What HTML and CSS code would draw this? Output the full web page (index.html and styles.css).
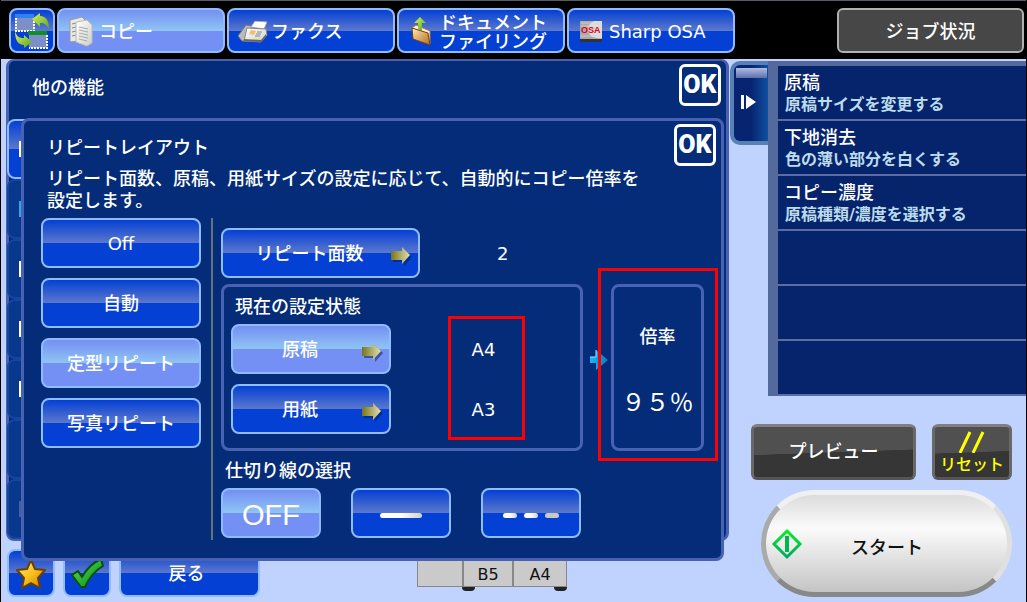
FILE: index.html
```html
<!DOCTYPE html>
<html lang="ja">
  <head>
    <meta charset="utf-8">
    <title>リピートレイアウト</title>
    <link rel="stylesheet" href="styles.css">
  </head>
  <body>
    <svg class="defs" aria-hidden="true">
      <defs>
        <linearGradient id="leaf" x1="0" y1="0" x2="1" y2="1">
          <stop offset="0" stop-color="#d8f060" />
          <stop offset="1" stop-color="#58a818" />
        </linearGradient>
        <linearGradient id="paper" x1="0" y1="0" x2="1" y2="1">
          <stop offset="0" stop-color="#ffffff" />
          <stop offset="1" stop-color="#cfcfc8" />
        </linearGradient>
        <linearGradient id="folder" x1="0" y1="0" x2="1" y2="1">
          <stop offset="0" stop-color="#ffe8c0" />
          <stop offset="1" stop-color="#b86a18" />
        </linearGradient>
        <linearGradient id="olive" x1="0" y1="0" x2="1" y2="0">
          <stop offset="0" stop-color="#77751a" />
          <stop offset="1" stop-color="#e4e2b4" />
        </linearGradient>
        <linearGradient id="gold" x1="0" y1="0" x2="1" y2="1">
          <stop offset="0" stop-color="#fff080" />
          <stop offset="0.5" stop-color="#f8c020" />
          <stop offset="1" stop-color="#d07800" />
        </linearGradient>
        <linearGradient id="tick" x1="0" y1="0" x2="1" y2="1">
          <stop offset="0" stop-color="#60e050" />
          <stop offset="1" stop-color="#008818" />
        </linearGradient>
        <linearGradient id="sky" x1="0" y1="0" x2="1" y2="0">
          <stop offset="0" stop-color="#10b8ff" />
          <stop offset="1" stop-color="#1078c0" />
        </linearGradient>
        <linearGradient id="start" x1="0" y1="0" x2="0" y2="1">
          <stop offset="0" stop-color="#00f020" />
          <stop offset="1" stop-color="#00a868" />
        </linearGradient>
        <symbol id="next" viewBox="0 0 22 20">
          <path d="M3 7h11V3l8 8-8 9v-4H3z" fill="#001a50" opacity="0.5" />
          <path d="M1 5h11V1l8 8-8 9v-4H1z" fill="url(#olive)" />
        </symbol>
      </defs>
    </svg>

    <header class="modes">
      <button class="btn swap" aria-label="画面切替">
        <svg width="36" height="38" viewBox="0 0 36 38">
          <path d="M1 1h19v17H1z" fill="#7c8fc8" />
          <path d="M1 1h19v4H1z" fill="#3080f0" />
          <path d="M2 5v13h18V6" fill="none" stroke="#fff" stroke-width="2" stroke-dasharray="2 1" />
          <path d="M15 19h18v16H15z" fill="#7c8fc8" />
          <path d="M14 18h19v4H14z" fill="#109020" />
          <path d="M33 22v13H15" fill="none" stroke="#fff" stroke-width="2" stroke-dasharray="2 1" />
          <path d="M18 6l8-6v3c6 0 9 5 9 13-3-5-5-6-9-6v4z" fill="url(#leaf)" />
          <path d="M1 18c2 6 4 7 9 7v-3l8 7-8 6v-3c-6 0-9-5-9-14z" fill="url(#leaf)" />
        </svg>
      </button>
      <button class="btn mode active">
        <svg width="24" height="30" viewBox="1 0 24 30">
          <path d="M2 3l12-3 3 3v20L2 25z" fill="#e8e8e4" stroke="#999" />
          <path d="M4 7l4-1M4 11l4-1M4 15l4-1M4 19l4-1" stroke="#888" />
          <path d="M8 5l11-2 5 5v18l-5 3L8 25z" fill="url(#paper)" stroke="#bbb" />
          <path d="M11 10l9 2M11 13l9 2M11 16l9 2M11 19l9 2M11 22l8 2" stroke="#aaa" />
        </svg>
        <span>コピー</span>
      </button>
      <button class="btn mode fax">
        <svg width="32" height="22" viewBox="0 0 32 22">
          <path d="M1 15L9 4l6 1-6 15H5z" fill="#bbb" stroke="#777" />
          <path d="M14 6l4-6 12 1-3 7z" fill="#fff" stroke="#aaa" />
          <path d="M10 7l19 1 1 6-6 7-17-1z" fill="url(#paper)" stroke="#888" />
          <path d="M14 9l5 1-2 4-5-1z" fill="#f0c070" />
          <path d="M20 11h5M19 13h5M18 15h5" stroke="#888" />
          <path d="M7 18l17 1 5-6v3l-5 5-17-1z" fill="#666" />
        </svg>
        <span>ファクス</span>
      </button>
      <button class="btn mode">
        <svg width="24" height="30" viewBox="0 0 24 30">
          <path d="M3 11l4-3 14 6v13L5 22z" fill="#fff3dc" stroke="#a87838" />
          <path d="M9 12V6H5l6-6 6 6h-4v8z" fill="url(#leaf)" />
          <path d="M3 11l16 5 2 12-17-6z" fill="url(#folder)" stroke="#704010" />
        </svg>
        <span>ドキュメント<br>ファイリング</span>
      </button>
      <button class="btn mode">
        <svg width="24" height="24" viewBox="0 0 24 24">
          <path d="M1 1h22v21H1z" fill="#aaa" />
          <path d="M2 3h20M2 6h20M2 16h20" stroke="#ccc" />
          <path d="M23 1v17c-8 1-14-2-14-9 0-4 3-7 7-8z" fill="#dcdcdc" />
          <path d="M1 19h22v3H1z" fill="#333" />
          <text x="2" y="13" class="osa">OSA</text>
        </svg>
        <span>Sharp OSA</span>
      </button>
      <button class="dark jobs">ジョブ状況</button>
    </header>

    <main>
      <section class="workspace">
        <div class="panel back-panel">
          <div class="panel-head">
            <h2>他の機能</h2>
            <button class="ok">OK</button>
          </div>
          <div class="tabs">
            <button class="tab current" aria-label="1"><i class="chip"></i></button>
            <button class="tab" aria-label="2"><i class="chip cyan"></i></button>
            <button class="tab" aria-label="3"><i class="chip"></i></button>
            <button class="tab" aria-label="4"><i class="chip"></i></button>
            <button class="tab" aria-label="5"><i class="chip"></i></button>
            <button class="tab" aria-label="6"></button>
            <button class="tab" aria-label="7"><i class="chip dim"></i></button>
          </div>
        </div>

        <div class="panel dialog" role="dialog" aria-labelledby="dialog-title">
          <div class="panel-head">
            <h1 id="dialog-title">リピートレイアウト</h1>
            <button class="ok">OK</button>
          </div>
          <p class="note">リピート面数、原稿、用紙サイズの設定に応じて、自動的にコピー倍率を<br>設定します。</p>

          <div class="settings">
            <div class="kinds">
              <button class="btn">Off</button>
              <button class="btn">自動</button>
              <button class="btn active">定型リピート</button>
              <button class="btn">写真リピート</button>
            </div>

            <div class="details">
              <div class="count">
                <button class="btn linked">リピート面数<svg width="22" height="20"><use href="#next" /></svg></button>
                <span>2</span>
              </div>

              <div class="state">
                <div class="frame current-state">
                  <h3>現在の設定状態</h3>
                  <div class="sizes">
                    <div class="size-buttons">
                      <button class="btn linked active">原稿<svg width="22" height="20"><use href="#next" /></svg></button>
                      <button class="btn linked">用紙<svg width="22" height="20"><use href="#next" /></svg></button>
                    </div>
                    <div class="size-values">
                      <span>A4</span>
                      <span>A3</span>
                    </div>
                  </div>
                </div>
                <svg class="to-rate" width="18" height="20" viewBox="0 0 18 20">
                  <path d="M0 7h6V0l12 10L6 20v-7H0z" fill="url(#sky)" />
                  <path d="M0 7h6V0" fill="none" stroke="#a8e0ff" />
                </svg>
                <div class="frame rate">
                  <span>倍率</span>
                  <strong>９５％</strong>
                </div>
              </div>

              <h3 class="line-title">仕切り線の選択</h3>
              <div class="lines">
                <button class="btn active off">OFF</button>
                <button class="btn" aria-label="実線"><i class="dash long"></i></button>
                <button class="btn" aria-label="破線"><i class="dash"></i><i class="dash"></i><i class="dash grey"></i></button>
              </div>
            </div>
          </div>
        </div>

        <footer class="bottom-bar">
          <button class="btn square" aria-label="お気に入り">
            <svg width="32" height="32" viewBox="0 0 32 32">
              <path d="M16 2l4 9 10 1-7 8 2 10-9-5-9 5 2-10-7-8 10-1z" fill="url(#gold)" stroke="#6a4000" stroke-width="2" stroke-linejoin="round" />
            </svg>
          </button>
          <button class="btn square" aria-label="確認">
            <svg width="34" height="32" viewBox="0 0 34 32">
              <path d="M2 17l6-4 4 6C17 10 22 5 31 1l2 7C24 13 19 20 15 29h-4z" fill="url(#tick)" stroke="#045010" stroke-width="2" stroke-linejoin="round" />
            </svg>
          </button>
          <button class="btn return">戻る</button>
          <div class="trays">
            <span></span>
            <span>B5</span>
            <span>A4</span>
          </div>
        </footer>
      </section>

      <aside class="side">
        <div class="menu">
          <button class="fold" aria-label="閉じる">
            <svg width="16" height="14" viewBox="0 0 16 14">
              <path d="M0 0h3v14H0zM5 0l10 7-10 7z" fill="#fff" />
            </svg>
          </button>
          <ul>
            <li><b>原稿</b><small>原稿サイズを変更する</small></li>
            <li><b>下地消去</b><small>色の薄い部分を白くする</small></li>
            <li><b>コピー濃度</b><small>原稿種類/濃度を選択する</small></li>
            <li></li>
            <li></li>
            <li></li>
          </ul>
        </div>
        <div class="actions">
          <button class="dark preview">プレビュー</button>
          <button class="dark reset">
            <svg width="28" height="22" viewBox="0 0 28 22">
              <path d="M2 22L12 1M15 22L25 1" stroke="#ffff00" stroke-width="3" />
            </svg>
            <span>リセット</span>
          </button>
          <button class="start">
            <svg width="32" height="32" viewBox="0 0 32 32">
              <path d="M16 3l13 13-13 13L3 16z" fill="none" stroke="url(#start)" stroke-width="3" />
              <path d="M14 8h4v16h-4z" fill="#00b848" />
            </svg>
            <span>スタート</span>
          </button>
        </div>
      </aside>
    </main>
  </body>
</html>
```
FILE: styles.css
```css
* {
  box-sizing: border-box;
}

body {
  margin: 0;
  min-height: 100vh;
  display: flex;
  flex-direction: column;
  border: 1px solid #000;
  border-width: 0 1px;
  background: #c0d3ff;
  color: #fff;
  font-family: "DejaVu Sans", "Noto Sans CJK JP", sans-serif;
  font-size: 18px;
  font-weight: 500;
  line-height: 22px;
}

button {
  margin: 0;
  padding: 0;
  color: inherit;
  font: inherit;
  cursor: pointer;
}

h1,
h2,
h3,
p,
ul {
  margin: 0;
  padding: 0;
  font-size: 18px;
  font-weight: 500;
}

.defs {
  position: absolute;
  width: 0;
  height: 0;
}

/* glossy blue buttons */
.btn {
  display: flex;
  align-items: center;
  justify-content: center;
  height: 50px;
  padding-top: 2px;
  border: 2px solid #8ebcff;
  border-radius: 8px;
  background: linear-gradient(#0440d4, #5c78cc 50%, #0440d4 50%);
}

.btn.active {
  background: linear-gradient(#748ff2, #90c4f4 50%, #7490f4 50%);
}

/* top row */
.modes {
  display: flex;
  gap: 2px;
  height: 59px;
  padding: 7px 2px 6px 8px;
  border-top: 1px solid #555b68;
  background: #000;
}

.modes .btn {
  height: 45px;
}

.swap {
  flex: 0 0 46px;
}

.mode {
  flex: 0 1 168px;
  justify-content: flex-start;
  gap: 6px;
  padding: 2px 10px 0;
  line-height: 19px;
  text-align: left;
}

.mode.fax {
  gap: 2px;
  padding-left: 8px;
}

.osa {
  fill: #e00020;
  font: bold 9px "Liberation Sans", sans-serif;
}

.dark {
  border: 3px solid #777;
  border-color: #808080 #686868 #555;
  border-radius: 6px;
  background: linear-gradient(178deg, #505050 50%, #363636 51%);
}

.jobs {
  flex: 0 0 187px;
  margin-left: auto;
  padding-top: 2px;
  border: 2px solid #b0b0b0;
  background: #474747;
}

main {
  flex: 1;
  display: flex;
}

/* left work area */
.workspace {
  position: relative;
  flex: 1;
  min-width: 0;
  padding-left: 5px;
}

.panel {
  border: 2px solid #4861b0;
  border-width: 2px 3px;
  border-radius: 8px;
  background: #042c78;
}

.back-panel {
  margin-right: 1px;
}

.panel-head {
  display: flex;
  justify-content: space-between;
}

.back-panel .panel-head {
  height: 58px;
  padding: 3px 5px 0 23px;
}

.back-panel h2 {
  line-height: 48px;
}

.ok {
  width: 42px;
  height: 42px;
  border: 3px solid #fff;
  border-radius: 6px;
  background: #042c78;
  font-family: Roboto, "Liberation Sans", sans-serif;
  font-size: 25px;
  font-weight: 900;
  line-height: 36px;
}

.tabs {
  display: flex;
  flex-direction: column;
}

.tab {
  width: 60px;
  height: 60px;
  margin-left: -2px;
  padding-left: 10px;
  border: 2px solid #1644a0;
  border-radius: 8px;
  background: #08388c;
  text-align: left;
}

.tab.current {
  border-color: #8ebcff;
  background: linear-gradient(#0440d4, #5c78cc 50%, #0440d4 50%);
}

.chip {
  display: block;
  width: 20px;
  height: 16px;
  background: #fff;
}

.chip.cyan {
  background: #28a8e8;
}

.chip.dim {
  background: #4060a8;
}

.dialog {
  position: absolute;
  z-index: 1;
  top: 59px;
  left: 20px;
  right: 6px;
  border-width: 3px;
}

.dialog .panel-head {
  height: 47px;
  padding: 3px 5px 0 23px;
}

.dialog h1 {
  line-height: 48px;
}

.note {
  padding-left: 23px;
}

.settings {
  display: flex;
  gap: 10px;
  padding: 6px 16px 18px 17px;
}

.kinds {
  display: flex;
  flex-direction: column;
  gap: 10px;
  flex: 0 0 160px;
}

.details {
  flex: 1;
  padding: 10px 0 2px 8px;
  border-left: 2px solid #60747c;
}

.count {
  display: flex;
  align-items: center;
}

.linked {
  position: relative;
  width: 160px;
  padding-right: 22px;
}

.linked svg {
  position: absolute;
  right: 6px;
  top: 16px;
}

.count .linked {
  width: 199px;
}

.count span {
  padding: 2px 0 0 77px;
}

.state {
  display: flex;
  align-items: center;
  padding-top: 6px;
}

.frame {
  height: 167px;
  border: 3px solid #4861b0;
  border-radius: 8px;
}

.current-state {
  flex: 0 1 362px;
  padding-left: 7px;
}

.current-state h3 {
  padding: 9px 0 0 4px;
  height: 29px;
}

.sizes {
  display: flex;
  align-items: flex-start;
  gap: 57px;
}

.size-buttons {
  display: flex;
  flex-direction: column;
  gap: 10px;
  padding-top: 8px;
}

.size-values {
  display: flex;
  flex-direction: column;
  gap: 6px;
  width: 77px;
  padding: 4px 6px 0 0;
  border: 3px solid #f00;
  text-align: center;
  line-height: 54px;
}

.to-rate {
  margin: 0 3px 16px 7px;
}

.rate {
  position: relative;
  display: flex;
  flex-direction: column;
  align-items: center;
  gap: 36px;
  width: 93px;
  padding-top: 39px;
}

/* marked area round the ratio */
.rate::after {
  content: "";
  position: absolute;
  inset: -19px -17px -13px -16px;
  border: 3px solid #f00;
}

.rate strong {
  font-family: "Noto Sans CJK JP", sans-serif;
  font-size: 24px;
  font-weight: normal;
  line-height: 34px;
}

.line-title {
  padding: 9px 0 6px 4px;
}

.lines {
  display: flex;
  gap: 30px;
}

.lines .btn {
  flex: 0 1 100px;
  gap: 7px;
}

.lines .off {
  padding-top: 4px;
  font-family: "Liberation Sans", sans-serif;
  font-size: 29px;
}

.dash {
  width: 14px;
  height: 5px;
  margin-top: 2px;
  border-radius: 3px;
  background: linear-gradient(90deg, #fff 50%, #d0d0d0);
}

.dash.grey {
  background: #c8c8c8;
}

.dash.long {
  width: 42px;
}

.bottom-bar {
  display: flex;
  gap: 8px;
  padding: 8px 0 0 1px;
}

.bottom-bar .btn {
  height: 48px;
}

.square {
  flex: 0 0 48px;
}

.return {
  flex: 0 1 141px;
  padding-right: 6px;
}

/* paper trays of the machine */
.trays {
  display: flex;
  align-self: flex-start;
  height: 38px;
  margin-left: 149px;
  border: 1px solid #888;
  background: #cacaca;
  color: #111;
  font-size: 16px;
  line-height: 50px;
  text-align: center;
}

.trays span {
  position: relative;
  width: 50px;
  border-left: 2px solid #888;
}

.trays span:first-child {
  width: 44px;
  border: 0;
}

.trays span:last-child {
  width: 54px;
}

.trays span + span::after {
  content: "";
  position: absolute;
  top: 37px;
  left: -2px;
  width: 13px;
  height: 4px;
  border-radius: 0 0 6px 6px;
  background: #222;
}

.trays span:last-child::after {
  left: 40px;
}

/* right side */
.side {
  flex: 0 0 296px;
  padding-top: 2px;
}

.menu {
  display: flex;
  align-items: flex-start;
}

.fold {
  flex: 0 0 38px;
  height: 84px;
  padding-right: 4px;
  border: 4px solid #5880b4;
  border-right: 0;
  border-radius: 10px 0 0 10px;
  background: linear-gradient(#b0bce0, #5c70b0) 2px 3px / 31px 10px no-repeat, linear-gradient(90deg, #062470 50%, #1050a0);
}

.menu ul {
  flex: 1;
  border-left: 10px solid #556a9c;
  border-top: 5px solid #556a9c;
  list-style: none;
}

.menu li {
  height: 55px;
  padding: 6px 0 0 6px;
  border-bottom: 2px solid #5c6ca4;
  background: #06246c;
}

.menu b,
.menu small {
  display: block;
  font-size: 18px;
  font-weight: 500;
}

.menu small {
  padding-left: 1px;
  color: #bcdcec;
  font-size: 16px;
  font-weight: bold;
}

.actions {
  display: grid;
  grid-template-columns: 165px 80px;
  justify-content: end;
  gap: 10px 16px;
  padding: 28px 14px 0 0;
}

.dark.preview,
.dark.reset {
  height: 56px;
}

.reset {
  color: #ffff00;
  font-size: 16px;
  line-height: 18px;
}

.reset svg,
.reset span {
  display: block;
  margin: 0 auto;
}

.reset span {
  padding-top: 3px;
}

.start {
  grid-column: 1 / 3;
  justify-self: end;
  display: flex;
  align-items: center;
  gap: 48px;
  width: 251px;
  height: 107px;
  padding-left: 5px;
  border: 5px solid;
  border-color: #f0f0f0 #e0e0e0 #888 #aaa;
  border-radius: 54px;
  background: linear-gradient(#dcdcdc, #fbfbfb 35%, #c4c4c4);
  color: #111;
}

.start span {
  padding-top: 8px;
}
```
